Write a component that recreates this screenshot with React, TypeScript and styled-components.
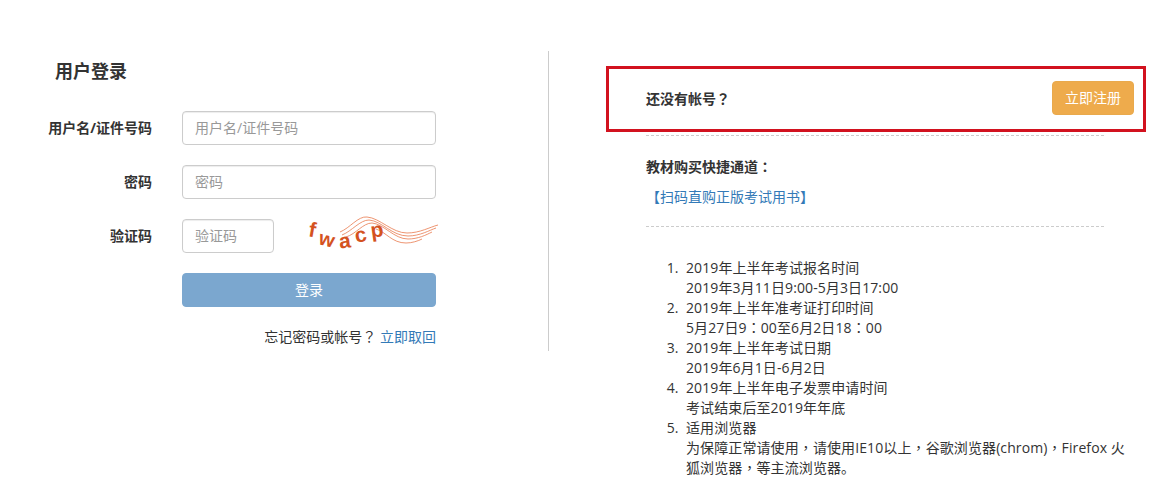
import React from "react";
import styled, { createGlobalStyle } from "styled-components";

const Global = createGlobalStyle`
  html, body { margin: 0; padding: 0; background: #fff; }
  body { font-family: "Open Sans", "Noto Sans CJK SC", sans-serif; font-size: 14px; color: #333; line-height: 20px; }
  * { box-sizing: border-box; }
`;

const Page = styled.div`
  display: flex;
  align-items: flex-start;
  width: 1165px;
  height: 496px;
  overflow: hidden;
`;

const LoginColumn = styled.section`
  width: 549px;
  height: 300px;
  margin-top: 51px;
  border-right: 1px solid #ccc;
  padding-top: 8px;
`;

const Title = styled.h2`
  margin: 0 0 28px 55px;
  font-size: 18px;
  font-weight: 700;
  line-height: 24px;
  color: #333;
`;

const FormRow = styled.div`
  display: flex;
  align-items: center;
  height: 34px;
  margin-bottom: 20px;
`;

const Label = styled.label`
  width: 152px;
  margin-right: 30px;
  text-align: right;
  font-weight: 700;
  font-size: 14px;
  white-space: nowrap;
  color: #333;
`;

const TextInput = styled.input<{ $w: number }>`
  width: ${(p) => p.$w}px;
  height: 34px;
  padding: 5px 12px 7px;
  border: 1px solid #ccc;
  border-radius: 4px;
  box-shadow: inset 0 1px 1px rgba(0, 0, 0, 0.075);
  font: inherit;
  font-size: 14px;
  color: #555;
  outline: none;
  &::placeholder { color: #999; opacity: 1; }
`;

const Captcha = styled.svg`
  display: block;
  margin-left: 26px;
  flex: none;
`;

const LoginButton = styled.button`
  width: 254px;
  height: 34px;
  margin-left: 182px;
  padding: 0;
  display: block;
  border: 1px solid #7ba7cf;
  border-radius: 4px;
  background: #7ba7cf;
  color: #fff;
  font: inherit;
  font-size: 14px;
`;

const Forgot = styled.div`
  width: 436px;
  margin-top: 20px;
  text-align: right;
  font-size: 14px;
  color: #333;
`;

const Link = styled.a`
  color: #337ab7;
  text-decoration: none;
`;

const Punct = styled.span`
  font-family: "Noto Sans CJK TC", sans-serif;
  line-height: 0;
`;

const InfoColumn = styled.section`
  width: 540px;
  margin-left: 57px;
  padding-top: 66px;
`;

const RegisterBox = styled.div`
  display: flex;
  align-items: center;
  justify-content: space-between;
  width: 540px;
  height: 66px;
  border: 3px solid #d2121f;
  padding: 0 9px 0 37px;
`;

const Question = styled.strong`
  font-size: 14px;
  font-weight: 700;
  color: #333;
  padding-bottom: 1px;
`;

const RegisterButton = styled.button`
  width: 82px;
  height: 34px;
  margin-bottom: 2px;
  padding: 0;
  border: 1px solid #e9a94c;
  border-radius: 4px;
  background: #eeab4c;
  color: #fff;
  font: inherit;
  font-size: 14px;
`;

const Section = styled.div<{ $top: number; $pad: string }>`
  width: 458px;
  margin: ${(p) => p.$top}px 0 0 40px;
  border-top: 1px dashed #ccc;
  padding: ${(p) => p.$pad};
`;

const SectionTitle = styled.div`
  font-weight: 700;
  color: #333;
  margin-bottom: 10px;
`;

const List = styled.ol`
  margin: 0;
  padding: 0 0 0 40px;
  width: 482px;
  color: #333;
  letter-spacing: 0.1px;
  li::marker {
    content: counter(list-item) ".  ";
    white-space: pre;
  }
`;

export default function App() {
  return (
    <>
      <Global />
      <Page>
        <LoginColumn>
          <Title>用户登录</Title>
          <FormRow>
            <Label>用户名/证件号码</Label>
            <TextInput $w={254} placeholder="用户名/证件号码" />
          </FormRow>
          <FormRow>
            <Label>密码</Label>
            <TextInput $w={254} placeholder="密码" />
          </FormRow>
          <FormRow>
            <Label>验证码</Label>
            <TextInput $w={92} placeholder="验证码" />
            <Captcha width="140" height="40" viewBox="0 0 140 40">
              <g fill="none" stroke="#e97a4e" strokeWidth="0.8">
                <path d="M40 16 C 50 12, 58 0, 67 1 C 80 2, 92 17, 107 17 C 120 17, 130 11, 138 9" />
                <path d="M42 19 C 52 15, 60 4, 69 4 C 82 5, 92 20, 108 20 C 120 20, 130 14, 136 12" />
                <path d="M46 21 C 56 18, 63 7, 72 7 C 84 8, 94 23, 108 23 C 118 23, 126 19, 132 16" />
                <path d="M76 13 C 86 16, 92 27, 106 27 C 112 27, 118 25, 122 23" />
              </g>
              <g fill="#d4521f" fontFamily="'Liberation Sans', sans-serif" fontWeight="700" fontSize="21">
                <text x="9" y="21" transform="rotate(10 13 14)">f</text>
                <text x="19" y="30" fontSize="20" transform="rotate(14 27 24)">w</text>
                <text x="39" y="32" transform="rotate(-6 45 26)">a</text>
                <text x="55" y="26" transform="rotate(-12 60 20)">c</text>
                <text x="71" y="21" transform="rotate(-8 77 18)">p</text>
              </g>
            </Captcha>
          </FormRow>
          <LoginButton>登录</LoginButton>
          <Forgot>
            忘记密码或帐号<Punct>？</Punct> <Link>立即取回</Link>
          </Forgot>
        </LoginColumn>
        <InfoColumn>
          <RegisterBox>
            <Question>还没有帐号<Punct>？</Punct></Question>
            <RegisterButton>立即注册</RegisterButton>
          </RegisterBox>
          <Section $top={3} $pad="21px 0 19px">
            <SectionTitle>教材购买快捷通道<Punct>：</Punct></SectionTitle>
            <Link>【扫码直购正版考试用书】</Link>
          </Section>
          <Section $top={0} $pad="31px 0 0">
            <List>
              <li>2019年上半年考试报名时间<br />2019年3月11日9:00-5月3日17:00</li>
              <li>2019年上半年准考证打印时间<br />5月27日9<Punct>：</Punct>00至6月2日18<Punct>：</Punct>00</li>
              <li>2019年上半年考试日期<br />2019年6月1日-6月2日</li>
              <li>2019年上半年电子发票申请时间<br />考试结束后至2019年年底</li>
              <li>适用浏览器<br />为保障正常请使用<Punct>，</Punct>请使用IE10以上<Punct>，</Punct>谷歌浏览器(chrom)<Punct>，</Punct>Firefox 火狐浏览器<Punct>，</Punct>等主流浏览器。</li>
            </List>
          </Section>
        </InfoColumn>
      </Page>
    </>
  );
}
